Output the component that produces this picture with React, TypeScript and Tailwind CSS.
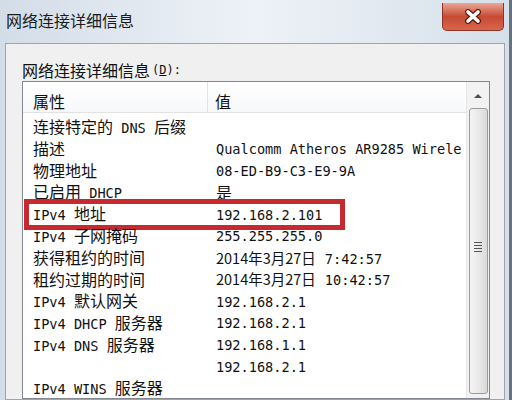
import React from 'react';

const CJK = /([\u3000-\u9fff\uff00-\uffef]+)/;

function Mixed({ s }: { s: string }) {
  const parts = s.split(CJK).filter((p) => p !== '');
  return (
    <>
      {parts.map((p, i) =>
        CJK.test(p) ? (
          <span key={i} className="font-['Noto_Sans_CJK_SC',sans-serif] text-[16px]">
            {p}
          </span>
        ) : (
          <span key={i} className="font-['DejaVu_Sans_Mono',monospace] text-[13.6px] whitespace-pre">
            {p}
          </span>
        )
      )}
    </>
  );
}

function DateValue({ date, time }: { date: string; time: string }) {
  return (
    <>
      <span className="font-['Noto_Sans_CJK_SC',sans-serif] text-[14.5px]">{date}</span>
      <span className="font-['DejaVu_Sans_Mono',monospace] text-[13.6px] whitespace-pre pl-[9px]">{time}</span>
    </>
  );
}

const rows: { name: string; value?: React.ReactNode; mark?: boolean }[] = [
  { name: '连接特定的 DNS 后缀' },
  { name: '描述', value: <Mixed s="Qualcomm Atheros AR9285 Wirele" /> },
  { name: '物理地址', value: <Mixed s="08-ED-B9-C3-E9-9A" /> },
  { name: '已启用 DHCP', value: <Mixed s="是" /> },
  { name: 'IPv4 地址', value: <Mixed s="192.168.2.101" />, mark: true },
  { name: 'IPv4 子网掩码', value: <Mixed s="255.255.255.0" /> },
  { name: '获得租约的时间', value: <DateValue date="2014年3月27日" time="7:42:57" /> },
  { name: '租约过期的时间', value: <DateValue date="2014年3月27日" time="10:42:57" /> },
  { name: 'IPv4 默认网关', value: <Mixed s="192.168.2.1" /> },
  { name: 'IPv4 DHCP 服务器', value: <Mixed s="192.168.2.1" /> },
  { name: 'IPv4 DNS 服务器', value: <Mixed s="192.168.1.1" /> },
  { name: '', value: <Mixed s="192.168.2.1" /> },
  { name: 'IPv4 WINS 服务器' },
];

export default function App() {
  return (
    <div className="w-[512px] h-[400px] overflow-hidden flex flex-col bg-gradient-to-r from-[#d3dde8] via-[#eef2f7] to-[#d6e0ea] border-r-[3px] border-[#68727e] text-[#111]">
      {/* Title bar */}
      <div className="h-[43px] shrink-0 flex items-start justify-between pl-[6px] pr-[5px]">
        <div className="pt-[8px] font-['Noto_Sans_CJK_SC',sans-serif] text-[16px] leading-[24px] text-[#1c1c1c]">
          网络连接详细信息
        </div>
        <div className="mt-[3px] w-[62px] h-[28px] rounded-b-[5px] border border-t-0 border-[#8a3426] bg-gradient-to-b from-[#e9a696] via-[#c74a33] to-[#d8654c] flex items-center justify-center">
          <svg width="18" height="15" viewBox="0 0 18 15">
            <path d="M4 3 L14 12 M14 3 L4 12" stroke="#5a1a10" strokeWidth="6" strokeLinecap="round" />
            <path d="M4 3 L14 12 M14 3 L4 12" stroke="#ffffff" strokeWidth="3.6" strokeLinecap="round" />
          </svg>
        </div>
      </div>

      {/* Body panel */}
      <div className="ml-[5px] mr-[4px] flex-1 min-h-0 bg-[#f0f0f0] border border-[#9ba5b1] pt-[15px] pl-[16px] pr-[14px] flex flex-col">
        <div className="h-[22px] leading-[22px] flex items-center">
          <span className="font-['Noto_Sans_CJK_SC',sans-serif] text-[16px]">网络连接详细信息</span>
          <span className="font-['DejaVu_Sans_Mono',monospace] text-[12px] pl-[2px]">
            (<span className="underline">D</span>):
          </span>
        </div>

        {/* List box */}
        <div className="flex-1 min-h-0 bg-white border border-[#828790] flex">
          <div className="flex-1 flex flex-col">
            <div className="h-[31px] shrink-0 flex border-b border-[#e2e2e2] bg-gradient-to-b from-white to-[#f7f8fa]">
              <div className="w-[185px] border-r border-[#e3e3e3] pl-[10px] pt-[8px] font-['Noto_Sans_CJK_SC',sans-serif] text-[16px] leading-[22px]">
                属性
              </div>
              <div className="pl-[7px] pt-[8px] font-['Noto_Sans_CJK_SC',sans-serif] text-[16px] leading-[22px]">
                值
              </div>
            </div>
            <div className="pt-[4px] flex flex-col">
              {rows.map((r, i) => (
                <div key={i} className="relative h-[21.75px] flex items-center leading-[21.75px]">
                  <div className="w-[193px] pl-[10px] whitespace-nowrap">
                    <Mixed s={r.name} />
                  </div>
                  <div className="whitespace-nowrap">{r.value}</div>
                  {r.mark && (
                    <div className="absolute top-[-5px] left-[1px] w-[321px] h-[31px] border-[5px] border-[#c62a30]" />
                  )}
                </div>
              ))}
            </div>
          </div>

          {/* Scrollbar */}
          <div className="w-[23px] shrink-0 bg-[#f2f2f2] border-l border-[#e6e6e6] flex flex-col items-center">
            <div className="h-[26px] flex items-center justify-center">
              <svg width="8" height="5" viewBox="0 0 8 5">
                <path d="M0 5 L4 1 L8 5 Z" fill="#505050" />
              </svg>
            </div>
            <div className="w-[19px] flex-1 mb-[4px] rounded-[3px] border border-[#9b9b9b] bg-gradient-to-r from-[#f5f5f5] via-[#e9e9e9] to-[#d9d9d9] flex items-center justify-center">
              <div className="flex flex-col gap-[2px] mt-[-8px]">
                <div className="w-[8px] h-[1px] bg-[#555]" />
                <div className="w-[8px] h-[1px] bg-[#555]" />
                <div className="w-[8px] h-[1px] bg-[#555]" />
                <div className="w-[8px] h-[1px] bg-[#555]" />
              </div>
            </div>
          </div>
        </div>
      </div>
    </div>
  );
}
